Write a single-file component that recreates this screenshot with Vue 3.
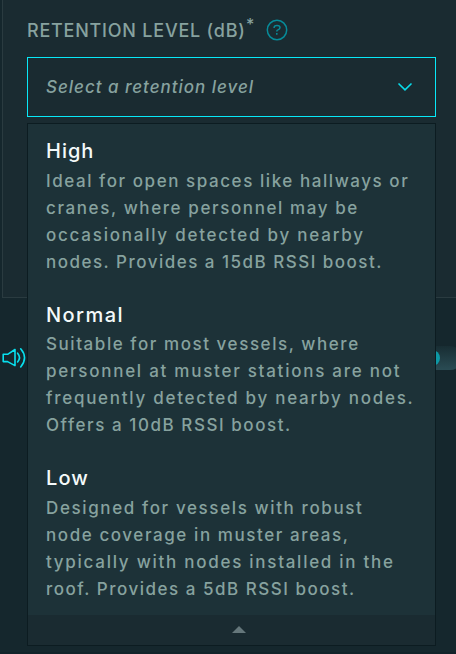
<script setup>
const options = [
  {
    name: 'High', spacing: 1,
    lines: [
      ['Ideal for open spaces like hallways or', 1.56],
      ['cranes, where personnel may be', 1.6],
      ['occasionally detected by nearby', 1.76],
      ['nodes. Provides a 15dB RSSI boost.', 1.49],
    ],
  },
  {
    name: 'Normal', spacing: 1.45,
    lines: [
      ['Suitable for most vessels, where', 1.56],
      ['personnel at muster stations are not', 1.74],
      ['frequently detected by nearby nodes.', 1.74],
      ['Offers a 10dB RSSI boost.', 1.56],
    ],
  },
  {
    name: 'Low', spacing: 1.1,
    lines: [
      ['Designed for vessels with robust', 1.62],
      ['node coverage in muster areas,', 1.58],
      ['typically with nodes installed in the', 1.73],
      ['roof. Provides a 5dB RSSI boost.', 1.51],
    ],
  },
]
</script>

<template>
  <div class="page">
    <div class="card"></div>
    <svg class="speaker" width="26" height="24" viewBox="0 0 26 24">
      <path d="M3.2 8.3H7.6L15 3.5V19.6L7.6 15.6H3.2Z" />
      <path d="M17.6 7.2Q21.4 11.5 17.6 16" />
      <path d="M20.7 2.8Q28.4 11.8 20.7 21" />
    </svg>
    <div class="slider"><span class="knob"></span></div>

    <div class="field">
      <div class="label">
        <span class="label-text">RETENTION LEVEL (dB)</span><span class="star">*</span>
        <svg class="help" width="22" height="22" viewBox="0 0 22 22">
          <circle cx="11" cy="11" r="9.7" />
          <path d="M8.1 9V8.6Q8.1 6.4 11 6.4Q14 6.4 14 8.6Q14 10.2 12 10.9Q10.8 11.3 10.8 12.5" />
          <path d="M10.8 14.1V15.8" />
        </svg>
      </div>
      <div class="select">
        <span class="placeholder">Select a retention level</span>
        <svg width="16" height="10" viewBox="0 0 16 10"><path d="M1.5 1.5L8 7.8L14.5 1.5" /></svg>
      </div>
      <div class="menu">
        <div class="list">
          <div v-for="o in options" :key="o.name" class="option">
            <div class="name" :style="{ letterSpacing: o.spacing + 'px' }">{{ o.name }}</div>
            <div v-for="l in o.lines" :key="l[0]" class="line" :style="{ letterSpacing: l[1] + 'px' }">{{ l[0] }}</div>
          </div>
        </div>
        <div class="footer">
          <svg width="14" height="7" viewBox="0 0 14 7"><path d="M0 7L7 0L14 7Z" /></svg>
        </div>
      </div>
    </div>
  </div>
</template>

<style>
body { background: #15272d; }
</style>

<style scoped>
.page {
  position: relative;
  box-sizing: border-box;
  width: 456px;
  height: 654px;
  overflow: hidden;
  background: linear-gradient(#15272d 0 652px, #12232a 652px);
  font-family: Inter, "Liberation Sans", sans-serif;
}
.card {
  position: absolute;
  top: -2px;
  left: 2px;
  width: 480px;
  height: 298px;
  border: 1px solid #2a3b40;
  background: #1a2b31;
}
.speaker {
  position: absolute;
  left: 0;
  top: 346px;
  fill: none;
  stroke: #08e0ee;
  stroke-width: 1.6;
  stroke-linejoin: round;
  stroke-linecap: round;
}
.slider {
  position: absolute;
  left: 400px;
  top: 346px;
  width: 62px;
  height: 24px;
  border-radius: 12px;
  background: linear-gradient(#182d33, #2a4c54);
}
.knob {
  position: absolute;
  left: 24px;
  top: 4px;
  width: 16px;
  height: 16px;
  border-radius: 50%;
  background: #0d98a5;
}
.field {
  position: relative;
  box-sizing: border-box;
  padding: 0 20px 0 27px;
}
.label {
  display: flex;
  height: 57px;
  color: #87a29f;
}
.label-text {
  width: 219px;
  padding-top: 20px;
  font-size: 18px;
  font-weight: 500;
  line-height: 22px;
  letter-spacing: 0.77px;
  white-space: nowrap;
}
.star {
  width: 9px;
  padding-top: 13px;
  font-size: 16px;
  font-weight: 500;
  line-height: 22px;
}
.help {
  margin: 18.5px 0 0 11.3px;
  fill: none;
  stroke: #078b99;
  stroke-width: 1.5;
}
.select {
  display: flex;
  align-items: center;
  justify-content: space-between;
  box-sizing: border-box;
  height: 60px;
  padding: 0 22px 0 18px;
  border: 1px solid #08e8f7;
  background: #1a2b31;
}
.select svg {
  fill: none;
  stroke: #08dbe9;
  stroke-width: 1.6;
}
.placeholder {
  color: #87a29f;
  font-size: 17px;
  font-style: italic;
  font-weight: 500;
  letter-spacing: 0.98px;
}
.menu {
  box-sizing: border-box;
  height: 523px;
  margin-top: 6px;
  border: 1px solid #0c1c21;
  background: #1a2b31;
}
.list {
  box-sizing: border-box;
  height: 491px;
  padding: 10px 0 0 18px;
  background: #1d3238;
}
.option {
  height: 163.4px;
}
.option:first-child .name {
  margin-top: 0;
  margin-bottom: 0;
}
.name {
  margin-top: 0.2px;
  margin-bottom: -0.2px;
  color: #f4fafa;
  font-size: 20px;
  font-weight: 500;
  line-height: 34px;
}
.option {
  display: flex;
  flex-direction: column;
}
.line {
  color: #87a29f;
  font-size: 17px;
  font-weight: 500;
  line-height: 27px;
  white-space: nowrap;
}
.footer {
  display: flex;
  justify-content: center;
  padding: 11px 0 0 14px;
}
.footer svg {
  fill: #65777b;
}
</style>
